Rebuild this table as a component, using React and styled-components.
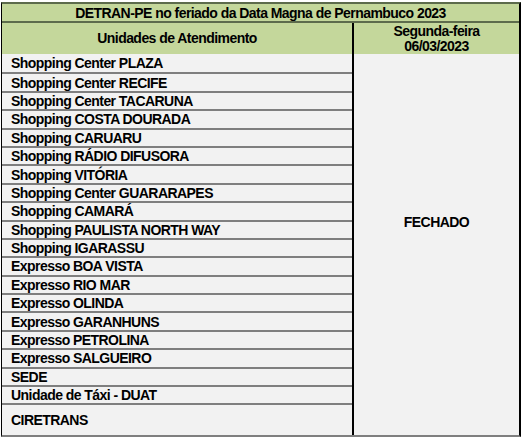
import React from "react";
import styled, { createGlobalStyle } from "styled-components";

const Global = createGlobalStyle`
  html, body { margin: 0; padding: 0; background: #ffffff; }
  body { font-family: "Liberation Sans", Arial, sans-serif; }
`;

const Table = styled.div`
  margin: 2px 0 0 1px;
  width: 520px;
  border-left: 1px solid #000;
  border-right: 2px solid #000;
  border-top: 2px solid #5d6b4c;
  border-bottom: 2px solid #7f7f7f;
  box-sizing: border-box;
  font-weight: bold;
  font-size: 14px;
  letter-spacing: -0.55px;
  color: #000;
`;

const Title = styled.div`
  height: 17px;
  background: #c4d79b;
  border-bottom: 2px solid #5d6b4c;
  display: flex;
  align-items: center;
  justify-content: center;
  line-height: 1;
`;

const HeaderRow = styled.div`
  display: grid;
  grid-template-columns: 350px 1fr;
  height: 31px;
  background: #c4d79b;
`;

const HeaderCell = styled.div`
  display: flex;
  flex-direction: column;
  align-items: center;
  justify-content: center;
  text-align: center;
  line-height: 15px;
  border-left: ${(p) => (p.$divider ? "2px solid #000" : "none")};
`;

const Body = styled.div`
  display: grid;
  grid-template-columns: 350px 1fr;
  background: #f2f2f2;
`;

const UnitList = styled.div`
  display: flex;
  flex-direction: column;
`;

const Unit = styled.div`
  height: ${(p) => (p.$tall ? "32px" : "18.4px")};
  box-sizing: border-box;
  border-top: ${(p) => (p.$first ? "none" : "2px solid #7f7f7f")};
  display: flex;
  align-items: center;
  padding-left: 9px;
  line-height: 1;
`;

const Status = styled.div`
  border-left: 2px solid #000;
  display: flex;
  align-items: center;
  justify-content: center;
  padding-bottom: 46px;
`;

const units = [
  "Shopping Center PLAZA",
  "Shopping Center RECIFE",
  "Shopping Center TACARUNA",
  "Shopping COSTA DOURADA",
  "Shopping CARUARU",
  "Shopping RÁDIO DIFUSORA",
  "Shopping VITÓRIA",
  "Shopping Center GUARARAPES",
  "Shopping CAMARÁ",
  "Shopping PAULISTA NORTH WAY",
  "Shopping IGARASSU",
  "Expresso BOA VISTA",
  "Expresso RIO MAR",
  "Expresso OLINDA",
  "Expresso GARANHUNS",
  "Expresso PETROLINA",
  "Expresso SALGUEIRO",
  "SEDE",
  "Unidade de Táxi - DUAT",
  "CIRETRANS",
];

export default function App() {
  return (
    <>
      <Global />
      <Table>
        <Title>DETRAN-PE no feriado da Data Magna de Pernambuco 2023</Title>
        <HeaderRow>
          <HeaderCell>Unidades de Atendimento</HeaderCell>
          <HeaderCell $divider>
            <span>Segunda-feira</span>
            <span>06/03/2023</span>
          </HeaderCell>
        </HeaderRow>
        <Body>
          <UnitList>
            {units.map((u, i) => (
              <Unit key={u} $first={i === 0} $tall={i === units.length - 1}>
                {u}
              </Unit>
            ))}
          </UnitList>
          <Status>FECHADO</Status>
        </Body>
      </Table>
    </>
  );
}
